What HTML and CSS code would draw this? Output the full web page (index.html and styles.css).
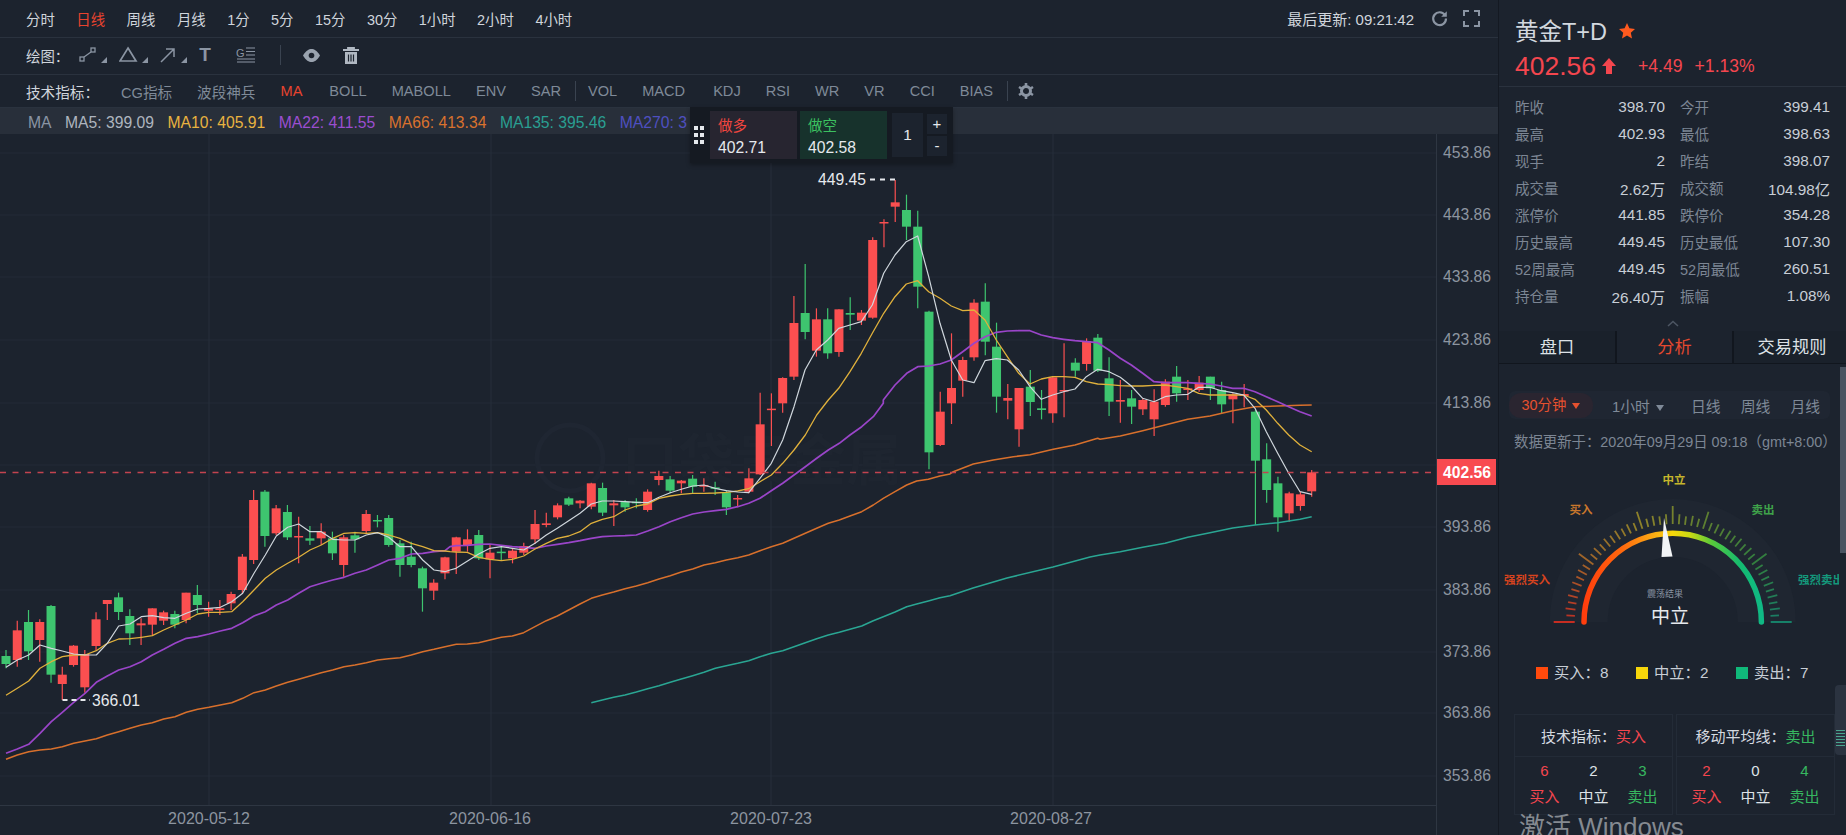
FILE: index.html
```html
<!DOCTYPE html>
<html lang="zh-CN">
<head>
<meta charset="utf-8">
<title>黄金T+D</title>
<link rel="stylesheet" href="styles.css">
</head>
<body>
<div class="app">
  <main class="main">
    <div class="bar bar-periods">
      <span>分时</span><span class="on">日线</span><span>周线</span><span>月线</span><span>1分</span><span>5分</span><span>15分</span><span>30分</span><span>1小时</span><span>2小时</span><span>4小时</span>
      <div class="updated">
        <span class="updated-text">最后更新: 09:21:42</span>
        <svg class="ic" width="17" height="17" viewBox="0 0 17 17"><path d="M14 5.2A6.4 6.4 0 1 0 15 8.5" fill="none" stroke="#8b95a3" stroke-width="2.2"/><path d="M15.8 1.2v5.6h-5.6z" fill="#8b95a3"/></svg>
        <svg class="ic" width="17" height="17" viewBox="0 0 17 17"><path d="M1 6V1h5M11 1h5v5M16 11v5h-5M6 16H1v-5" fill="none" stroke="#8b95a3" stroke-width="2"/></svg>
      </div>
    </div>
    <div class="bar bar-tools">
      <span class="bar-label">绘图：</span>
      <svg class="tool-a" width="28" height="18" viewBox="0 0 28 18"><rect x="1" y="11" width="4" height="4" fill="none" stroke="#8b95a3" stroke-width="1.3"/><rect x="12" y="2" width="4" height="4" fill="none" stroke="#8b95a3" stroke-width="1.3"/><path d="M5 11l7-5" stroke="#8b95a3" stroke-width="1.3"/><path d="M28 11v6h-6z" fill="#8b95a3"/></svg>
      <svg width="29" height="18" viewBox="0 0 29 18"><path d="M9 2l8 13H1z" fill="none" stroke="#8b95a3" stroke-width="1.7"/><path d="M29 11v6h-6z" fill="#8b95a3"/></svg>
      <svg width="27" height="18" viewBox="0 0 27 18"><path d="M1 16L14 3M6 3h8v8" fill="none" stroke="#8b95a3" stroke-width="1.5"/><path d="M27 11v6h-6z" fill="#8b95a3"/></svg>
      <span class="tool-t">T</span>
      <svg class="tool-g" width="20" height="18" viewBox="0 0 20 18"><text x="0" y="11" class="tool-g-text">G</text><path d="M10 2h9M10 5.5h9M10 9h9M1 13h18M1 16h18" stroke="#8b95a3" stroke-width="1.2"/></svg>
      <i class="sep sep-tools"></i>
      <svg class="tool-eye" width="17" height="13" viewBox="0 0 17 13"><path d="M0 6.5C3 1.5 5.800 0 8.500 0S14 1.500 17 6.500C14 11.500 11.200 13 8.500 13S3 11.500 0 6.500z" fill="#9aa3af"/><circle cx="8.500" cy="6.500" r="2.800" fill="#1c232e"/></svg>
      <svg class="tool-bin" width="16" height="17" viewBox="0 0 16 17"><path d="M0 3h16M5 3V1h6v2" fill="none" stroke="#b0b8c2" stroke-width="1.800"/><path d="M2 5h12v12H2z" fill="#b0b8c2"/><path d="M5.500 7.500v7M8 7.500v7M10.500 7.500v7" stroke="#1c232e" stroke-width="1.200"/></svg>
    </div>
    <div class="bar bar-ind">
      <span class="bar-label ind-label">技术指标：</span>
      <span>CG指标</span><span>波段神兵</span><span class="on">MA</span><span class="ml2">BOLL</span><span>MABOLL</span><span>ENV</span><span>SAR</span>
      <i class="sep sep-ind"></i>
      <span>VOL</span><span>MACD</span><span class="ml4">KDJ</span><span>RSI</span><span>WR</span><span>VR</span><span>CCI</span><span>BIAS</span>
      <i class="sep sep-ind"></i>
      <svg class="gear" width="16" height="16" viewBox="0 0 16 16"><circle cx="8" cy="8" r="4.500" fill="none" stroke="#8b95a3" stroke-width="3"/><path d="M8 0v3M8 13v3M1 4l2.500 1.500M12.500 10.500L15 12M1 12l2.500-1.500M12.500 5.500L15 4" stroke="#8b95a3" stroke-width="2.600"/></svg>
    </div>
    <div class="legend">
      <span class="lg-ma">MA</span><span class="lg-5">MA5: 399.09</span><span class="lg-10">MA10: 405.91</span><span class="lg-22">MA22: 411.55</span><span class="lg-66">MA66: 413.34</span><span class="lg-135">MA135: 395.46</span><span class="lg-270">MA270: 3</span>
    </div>
    <div class="chart"><svg id="chart" class="chart-svg" viewBox="0 134 1499 701" width="1499" height="701"></svg></div>
    <div class="trade">
      <div class="grip"><i></i><i></i><i></i><i></i><i></i><i></i></div>
      <div class="side side-long"><span class="side-name">做多</span><span class="side-price">402.71</span></div>
      <div class="side side-short"><span class="side-name">做空</span><span class="side-price">402.58</span></div>
      <div class="qty">1</div>
      <div class="steps"><span>+</span><span>-</span></div>
    </div>
  </main>
  <aside class="aside">
    <header class="head">
      <div class="title"><span>黄金T+D</span><svg class="star" width="16" height="16" viewBox="0 0 16 16"><path d="M8 0l2.400 5.300 5.600.6-4.200 3.800 1.200 5.700L8 12.500 3 15.400l1.200-5.700L0 5.900l5.600-.6z" fill="#ff5a1f"/></svg></div>
      <div class="price-line">
        <span class="price">402.56</span>
        <svg class="up" width="14" height="16" viewBox="0 0 14 16"><path d="M7 0l7 8H10v8H4V8H0z" fill="#f4464e"/></svg>
        <span class="chg">+4.49</span><span class="chg">+1.13%</span>
      </div>
    </header>
    <div class="stats">
      <div><span>昨收</span><b>398.70</b></div><div><span>今开</span><b>399.41</b></div>
      <div><span>最高</span><b>402.93</b></div><div><span>最低</span><b>398.63</b></div>
      <div><span>现手</span><b>2</b></div><div><span>昨结</span><b>398.07</b></div>
      <div><span>成交量</span><b>2.62万</b></div><div><span>成交额</span><b>104.98亿</b></div>
      <div><span>涨停价</span><b>441.85</b></div><div><span>跌停价</span><b>354.28</b></div>
      <div><span>历史最高</span><b>449.45</b></div><div><span>历史最低</span><b>107.30</b></div>
      <div><span>52周最高</span><b>449.45</b></div><div><span>52周最低</span><b>260.51</b></div>
      <div><span>持仓量</span><b>26.40万</b></div><div><span>振幅</span><b>1.08%</b></div>
    </div>
    <div class="fold"><svg width="12" height="7" viewBox="0 0 12 7"><path d="M1 6l5-4.500L11 6" fill="none" stroke="#4d5663" stroke-width="1.600"/></svg></div>
    <div class="tabs"><span>盘口</span><span class="on">分析</span><span>交易规则</span></div>
    <section class="analysis">
      <div class="frames">
        <span class="frame frame-on">30分钟<i class="tri tri-on"></i></span>
        <span class="frame frame-hour">1小时<i class="tri"></i></span>
        <span class="frame">日线</span><span class="frame">周线</span><span class="frame">月线</span>
      </div>
      <div class="stamp">数据更新于：2020年09月29日 09:18（gmt+8:00）</div>
      <svg id="gauge" class="gauge" viewBox="1500 465 340 185" width="340" height="185"></svg>
      <div class="tally">
        <span><i class="sq sq-buy"></i>买入：8</span>
        <span><i class="sq sq-mid"></i>中立：2</span>
        <span><i class="sq sq-sell"></i>卖出：7</span>
      </div>
      <div class="summary">
        <div class="sum-col">
          <div class="sum-head">技术指标：<em class="buy">买入</em></div>
          <div class="sum-grid">
            <span class="buy">6</span><span>2</span><span class="sell">3</span>
            <span class="buy">买入</span><span>中立</span><span class="sell">卖出</span>
          </div>
        </div>
        <div class="sum-col">
          <div class="sum-head">移动平均线：<em class="sell">卖出</em></div>
          <div class="sum-grid">
            <span class="buy">2</span><span>0</span><span class="sell">4</span>
            <span class="buy">买入</span><span>中立</span><span class="sell">卖出</span>
          </div>
        </div>
      </div>
    </section>
    <i class="scroll"></i>
    <div class="widget"><i></i></div>
    <div class="winmark">激活 Windows</div>
  </aside>
</div>
<script src="app.js"></script>
</body>
</html>
```
FILE: styles.css
```css
* { box-sizing: border-box; }
html, body { margin: 0; height: 835px; overflow: hidden; background: #1c232e; }
body { font-family: "Liberation Sans", "Noto Sans CJK SC", sans-serif; color: #c3cad3; }
i, em { font-style: normal; }
b { font-weight: 400; }

.app { display: flex; width: 1846px; height: 835px; }
.main { position: relative; width: 1499px; height: 835px; display: flex; flex-direction: column; border-right: 1px solid #141922; }

.bar { display: flex; align-items: center; padding-left: 26px; border-bottom: 1px solid #2a323e; font-size: 14.4px; }
.bar-periods { height: 38px; gap: 21.500px; color: #d0d5dc; }
.bar-periods .on { color: #e8432e; }
.updated { margin-left: auto; margin-right: 18px; display: flex; align-items: center; gap: 15px; }
.updated-text { margin-right: 2px; font-size: 15px; }
.ic { display: block; }

.bar-tools { height: 37px; gap: 12px; padding-bottom: 2px; }
.bar-label { color: #d0d5dc; }
.tool-a { margin-left: -2px; }
.tool-t { font-size: 19px; font-weight: 700; color: #8b95a3; width: 13px; line-height: 18px; }
.tool-g { margin-left: 12px; }
.tool-g-text { font-size: 11px; fill: #8b95a3; }
.sep { display: block; width: 1px; background: #3a4350; }
.sep-tools { height: 20px; margin: 0 0 0 12px; }
.tool-eye { margin-left: 10px; }
.tool-bin { margin-left: 11px; }

.bar-ind { height: 33px; gap: 25px; color: #7f8a98; font-size: 14.6px; }
.ind-label { margin-right: -3px; }
.bar-ind .on { color: #e8432e; }
.ml2 { margin-left: 2px; }
.ml4 { margin-left: 3px; }
.sep-ind { height: 20px; margin: 0 -13px 0 -11px; }
.gear { margin-left: -2px; }

.legend { height: 26px; background: #282f3a; display: flex; align-items: center; padding: 3px 0 0 28px; font-size: 15.700px; white-space: nowrap; overflow: hidden; flex: none; gap: 13.500px; }
.lg-ma { color: #8a95a5; }
.lg-5 { color: #aeb5bf; }
.lg-10 { color: #e9b340; }
.lg-22 { color: #9b4ed0; }
.lg-66 { color: #d9722e; }
.lg-135 { color: #2a9f92; }
.lg-270 { color: #4f4fc0; }

.chart { flex: 1; min-height: 0; }
.chart-svg { display: block; }
.ax { font-size: 15.700px; fill: #8d95a0; }
.ax-date { font-size: 16px; fill: #8d95a0; text-anchor: middle; }
.ax-tag { font-size: 15.700px; fill: #fff; font-weight: 700; }
.ax-ext { font-size: 15.700px; fill: #e6e9ed; }
.mark { font-size: 56px; fill: #1e2530; font-weight: 700; }

.trade { position: absolute; left: 690px; top: 107px; width: 263px; height: 56px; background: #151a22; display: flex; align-items: center; padding: 0 6px 0 4px; box-shadow: 0 2px 4px rgba(0,0,0,.3); }
.grip { width: 12px; margin-right: 4px; display: grid; grid-template-columns: 4px 4px; gap: 3px 2px; }
.grip i { display: block; width: 4px; height: 4px; background: #e4e8ec; }
.side { width: 87px; height: 48px; display: flex; flex-direction: column; justify-content: space-between; padding: 5px 8px 1px; font-size: 15.700px; line-height: 20px; }
.side-long { background: #272530; }
.side-short { background: #17322c; margin-left: 3px; }
.side-long .side-name { color: #f0453f; }
.side-short .side-name { color: #3cc060; }
.side-name { font-size: 14.500px; }
.side-price { color: #e6e9ed; }
.qty { width: 31px; height: 44px; margin-left: 5px; background: #1c232e; color: #e6e9ed; font-size: 15.300px; display: flex; align-items: center; justify-content: center; }
.steps { width: 20px; margin-left: 4px; display: flex; flex-direction: column; gap: 2px; }
.steps span { height: 20px; background: #1c232e; color: #e6e9ed; font-size: 15px; line-height: 19px; text-align: center; }

.aside { position: relative; width: 347px; height: 835px; overflow: hidden; }
.head { height: 87px; padding: 10px 0 0 16px; border-bottom: 1px solid #2a323e; }
.title { height: 40px; display: flex; align-items: center; gap: 12px; font-size: 23.500px; color: #d2d8df; }
.star { margin-top: 2px; }
.price-line { height: 30px; margin-top: 1px; display: flex; align-items: center; color: #f4464e; }
.price { font-size: 26.500px; margin-right: 6px; }
.up { margin-right: 22px; }
.chg { font-size: 17.600px; margin-right: 12px; }

.stats { display: grid; grid-template-columns: 150px 150px; column-gap: 15px; padding: 6px 0 0 16px; font-size: 15.300px; }
.stats div { height: 27px; display: flex; align-items: center; justify-content: space-between; }
.stats span { color: #7c8694; font-size: 14.500px; }
.stats b { color: #c8ced6; }
.fold { height: 22px; display: flex; align-items: center; justify-content: center; padding: 6px 0 0 0; }

.tabs { height: 33px; display: grid; grid-template-columns: 116px 115px 116px; font-size: 17.200px; text-align: center; line-height: 32px; color: #dde1e6; background: #11161e; gap: 2px; border-bottom: 1px solid #11161e; }
.tabs span { background: #1a212b; }
.tabs .on { background: #1c232e; color: #e5492f; }

.analysis { padding: 27px 10px 0 15px; }
.frames { height: 28px; display: flex; align-items: center; font-size: 14.800px; color: #7f8a98; background: #1f2632; border-radius: 6px; width: 321px; margin-left: -5px; }
.frame { width: 52px; text-align: center; }
.frame-on { width: 84px; height: 25px; line-height: 25px; background: #2a2530; border-radius: 12px; color: #e5512f; flex: none; font-size: 14.400px; }
.frame-hour { width: 70px; margin-left: 10px; margin-right: 8px; flex: none; }
.tri { display: inline-block; vertical-align: 1px; margin-left: 6px; border: 4.500px solid transparent; border-top: 6px solid #7f8a98; border-bottom: 0; }
.tri-on { border-top-color: #e5512f; }
.stamp { margin-top: 13px; height: 20px; font-size: 14.400px; line-height: 20px; color: #7c8694; white-space: nowrap; }
.gauge { display: block; margin: 12px 0 0 -15px; }
.g-lab { font-size: 11.500px; font-weight: 700; text-anchor: middle; }
.g-sub { font-size: 9px; fill: #8b95a3; text-anchor: middle; }
.g-val { font-size: 19px; fill: #e6e9ed; text-anchor: middle; }

.tally { margin-top: 14px; height: 20px; display: flex; padding-left: 22px; font-size: 15.300px; line-height: 20px; color: #c8ced6; }
.tally span { display: flex; align-items: center; width: 103px; }
.sq { display: block; width: 12px; height: 12px; margin-right: 6px; }
.sq-buy { background: #ff4a0d; }
.sq-mid { background: #f6d60b; }
.sq-sell { background: #10b97a; }

.summary { margin-top: 31px; width: 321px; height: 101px; display: grid; grid-template-columns: 159px 159px; gap: 3px; }
.sum-col { border: 1px solid #232b37; display: flex; flex-direction: column; }
.sum-head { height: 42px; border-bottom: 1px solid #232b37; display: flex; align-items: center; justify-content: center; font-size: 15px; color: #d5dae0; }
.sum-grid { flex: 1; display: grid; grid-template-columns: repeat(3, 49px); justify-content: center; grid-template-rows: 26px 26px; padding-top: 1px; font-size: 15px; line-height: 26px; text-align: center; color: #dfe3e8; }
.buy { color: #f4464e; }
.sell { color: #37b760; }

.scroll { position: absolute; right: 0; top: 367px; width: 6px; height: 186px; background: #4a5361; }
.widget { position: absolute; right: 0; top: 685px; width: 11px; height: 70px; background: #2b3340; border-radius: 4px 0 0 4px; }
.widget i { display: block; margin: 45px 1px 0; height: 18px; background: repeating-linear-gradient(#4aa58f 0 1px, #2b3340 1px 3px); }
.winmark { position: absolute; left: 20px; top: 812px; font-size: 26px; line-height: 30px; color: #858a91; white-space: nowrap; }
```
FILE: app.js
```js
var NS = 'http://www.w3.org/2000/svg';
function el(parent, name, attrs, text) {
  var n = document.createElementNS(NS, name);
  for (var k in attrs) n.setAttribute(k, attrs[k]);
  if (text !== undefined) n.textContent = text;
  parent.appendChild(n);
  return n;
}
var svg = document.getElementById('chart');
var RED = '#fb4f50', GREEN = '#3ec56f';

// horizontal grid + y axis
var ticks = [[153,'453.86'],[215,'443.86'],[277,'433.86'],[340,'423.86'],[403,'413.86'],[527,'393.86'],[590,'383.86'],[652,'373.86'],[713,'363.86'],[776,'353.86']];
ticks.forEach(function (t) {
  el(svg, 'line', {x1:0, x2:1437, y1:t[0], y2:t[0], stroke:'#232b37', 'stroke-width':1});
  el(svg, 'text', {x:1443, y:t[0]+5, class:'ax'}, t[1]);
});
el(svg, 'line', {x1:0, x2:1437, y1:465, y2:465, stroke:'#232b37', 'stroke-width':1});
[209,491,771,1053].forEach(function (x) {
  el(svg, 'line', {x1:x, x2:x, y1:134, y2:805, stroke:'#262e3a', 'stroke-width':1});
});
el(svg, 'line', {x1:1436.500, x2:1436.500, y1:134, y2:835, stroke:'#2e3642', 'stroke-width':1});
el(svg, 'line', {x1:0, x2:1437, y1:805.500, y2:805.500, stroke:'#2e3642', 'stroke-width':1});
[[209,'2020-05-12'],[490,'2020-06-16'],[771,'2020-07-23'],[1051,'2020-08-27']].forEach(function (d) {
  el(svg, 'text', {x:d[0], y:824, class:'ax-date'}, d[1]);
});

// watermark
el(svg, 'circle', {cx:570, cy:458, r:33, fill:'none', stroke:'#1f2632', 'stroke-width':5});
el(svg, 'text', {x:622, y:480, class:'mark'}, '口袋贵金属');

// candles: [type, high, top, bottom, low] measured in zoom crops (3x)
var groups = [
 [450, 0, 'g600,618,642,655 r512,541,630,650 g480,516,604,630 r508,516,570,635 g465,468,674,698 r650,674,702,750 r585,587,645,650 r600,612,712,728 r487,508,588,600 r450,450,462,510 g428,442,486,510 g478,498,550,585 r505,520,526,585 r475,475,524,555 r482,487,512,525 g482,492,524,535 r428,428,510,520 g405,435,465,490 r455,475,482,500 r450,475,480,495 r425,432,460,480 r312,320,420,432 r120,150,330,342 g120,125,258,290 r165,175,250,255 g165,186,262,270 r200,258,262,340 g228,265,272,285 r220,245,265,285 g245,265,310,330 r255,262,345,380 g245,256,268,308 r180,192,243,250 g195,210,214,232 g195,204,285,290 g270,280,345,380 g275,320,345,352 g350,355,415,485 r388,398,422,450 r320,322,370,388 r260,262,305,372 r238,268,285,305 g240,255,325,330 r285,308,328,385'],
 [400, 44, 'g440,455,458,480 r445,452,475,490 r428,438,458,465 r330,372,418,432 r338,370,375,382 r310,316,352,358 g290,295,314,318 r300,302,310,325 r248,250,320,328 g248,264,338,348 r300,310,316,378 g300,305,322,335 g295,305,310,325 r268,275,330,335 r212,228,240,256 g228,238,272,280 r240,242,250,280 g225,236,260,280 r235,255,260,275 g245,262,266,285 g270,277,322,345 r285,294,298,322'],
 [160, 66, 'r925,955,995,1000 r698,793,943,945 r700,746,750,858 r652,654,730,758 r408,489,650,660 g312,459,516,538 r445,478,572,590 g445,478,580,596 r448,448,576,590 g412,459,464,510 r450,458,482,495 r232,240,473,476 r178,186,190,262 r60,127,140,186 g104,150,200,240 g152,200,380,445 g452,455,877,928 r695,755,855,858 r520,684,730,792 r590,600,662,710 r418,428,592,602 g370,425,545,586 g488,560,710,758 r672,714,722,778 r684,684,808,860 g630,680,726,768 g690,745,750,778 r650,652,760,788 r550,690,694,772 g595,608,632,650 r535,543,612,632 g522,533,632,636'],
 [300, 98, 'g172,235,305,348 r240,300,305,368 g270,295,320,372 r295,300,328,345 r268,305,358,408 r238,245,315,320 g198,230,280,305 r240,265,270,300 r228,248,270,275 g230,230,265,300 g245,270,313,340 r280,283,298,370 r252,282,288,322 g330,335,482,675 g430,478,570,608 g530,550,652,695 r575,580,640,665 r575,583,618,632 r510,517,574,590']
];
groups.forEach(function (g) {
  g[2].split(' ').forEach(function (s, n) {
    var col = s[0] === 'r' ? RED : GREEN;
    var v = s.slice(1).split(',').map(function (a) { return g[0] + a / 3; });
    var x = 6 + 11.256 * (g[1] + n);
    el(svg, 'line', {x1:x, x2:x, y1:v[0], y2:v[3], stroke:col, 'stroke-width':1.200});
    el(svg, 'rect', {x:x-4.500, y:v[1], width:9, height:Math.max(v[2]-v[1],1.500), fill:col});
  });
});

// moving averages; each run is in the coordinates of one zoom crop
var O = {a:[0,450], b:[450,400], c:[740,160], d:[1100,300]};
function path(runs) {
  var out = [];
  runs.forEach(function (r) {
    var o = O[r[0]];
    var nums = r[1].split(/[ ,]/).map(Number), pts = [];
    for (var i = 0; i < nums.length; i += 2) pts.push([o[0] + nums[i]/3, o[1] + nums[i+1]/3]);
    out = out.filter(function (p) { return p[0] < pts[0][0]; }).concat(pts);
  });
  return out.map(function (p) { return p[0].toFixed(1) + ',' + p[1].toFixed(1); }).join(' ');
}
var lines = [
 ['#d8702c', 1.500, [
  ['a','18,928 52,915 86,905 120,900 154,897 187,890 221,880 255,873 289,866 322,855 356,845 390,835 424,825 457,818 491,807 525,800 559,787 593,778 627,772 661,765 695,758 728,745 762,728 796,720 829,708 863,697 896,688 930,678 964,668 998,660 1032,650 1065,645 1099,638 1133,630 1166,626 1200,623 1234,615 1268,605 1302,598 1335,590 1369,583 1403,580'],
  ['b','52,732 86,728 120,720 154,712 187,708 221,698 255,680 289,662 322,648 356,630 390,612 424,595 457,585 491,576 525,566 559,558 593,548 627,537 661,527 694,516 728,507 762,495 796,488 829,480 863,473 896,465 930,452 964,440 998,430 1032,415 1066,400 1100,385 1135,370 1168,360 1200,348 1235,335 1270,315 1300,295 1335,275 1370,255 1400,243 1435,238 1470,228 1500,222'],
  ['c','640,935 700,912 760,900 820,890 870,884 940,868 1005,855 1073,835 1140,828'],
  ['d','0,418 61,408 128,392 195,375 263,358 330,348 398,332 465,320 533,318 600,316 635,315']]],
 ['#2aa693', 1.500, [
  ['b','424,908 457,900 491,892 525,885 559,876 593,866 627,857 661,847 694,837 728,827 762,817 796,805 829,797 863,790 896,782 930,770 964,760 998,752 1032,740 1066,728 1100,716 1135,705 1168,697 1200,688 1235,678 1270,662 1300,650 1335,636 1370,620 1400,612 1435,603 1470,593 1500,587'],
  ['c','699,1284 801,1254 939,1221 1050,1191'],
  ['d','0,765 61,755 128,742 195,730 263,712 330,698 398,684 465,675 533,668 600,658 635,650']]],
 ['#9a45c9', 1.700, [
  ['a','18,910 52,897 86,883 120,850 154,815 187,787 221,757 255,730 289,697 322,678 356,660 390,650 424,635 457,615 491,598 525,580 559,565 593,560 627,552 661,543 695,535 728,518 762,498 796,485 829,465 863,450 896,430 930,410 964,400 998,390 1032,382 1065,370 1099,360 1133,345 1166,330 1200,325 1234,312 1268,310 1302,305 1335,302'],
  ['b','0,440 18,437 52,436 86,433 120,432 154,436 187,440 221,442 255,445 289,438 322,433 356,428 390,422 424,415 457,410 491,408 525,407 559,405 593,393 627,380 661,365 694,353 728,342 762,336 796,332 829,328 863,320 896,310 930,295 964,272 998,250 1032,225 1066,200 1100,175 1135,150 1168,130 1200,105 1235,80 1270,50 1300,10'],
  ['c','430,720 465,675 500,640 533,620 566,618 600,612 634,600 668,575 702,550 735,530 769,517 802,513 836,512 870,512 904,525 938,533 971,538 1005,542 1039,545 1073,548 1107,565 1140,590'],
  ['d','27,150 61,175 94,195 128,220 162,245 195,248 229,248 263,248 296,250 330,252 364,258 398,265 431,265 465,275 499,290 533,305 566,320 600,335 635,348']]],
 ['#e0b13c', 1.300, [
  ['a','18,736 52,715 86,693 120,655 154,635 187,620 221,615 255,615 289,602 322,580 356,567 390,566 424,562 457,557 491,540 525,525 559,510 593,492 627,487 661,487 695,485 728,455 762,420 796,385 829,360 863,340 896,322 930,300 964,285 998,265 1032,250 1065,248 1099,250 1133,248 1166,255 1200,265 1234,280 1268,290 1302,302 1335,303'],
  ['b','0,455 18,456 52,457 86,472 120,478 154,482 187,478 221,468 255,447 289,430 322,415 356,408 390,395 424,370 457,358 491,350 525,330 559,318 593,312 627,295 661,288 694,283 728,280 762,280 796,279 829,277 863,273 896,266 930,245 964,225 998,190 1032,150 1066,105 1100,45 1135,0'],
  ['c','296,685 330,635 364,580 397,520 431,460 465,410 499,372 533,362 566,395 600,415 634,438 668,452 702,450 735,480 769,540 802,590 836,640 870,672 904,657 938,650 971,650 1005,652 1039,665 1073,672 1107,676'],
  ['d','27,254 61,257 94,258 128,258 162,256 195,255 229,260 263,265 296,280 330,285 364,285 398,285 431,285 465,298 499,330 533,370 566,405 600,435 635,455']]],
 ['#cfd6dc', 1.200, [
  ['a','18,652 52,630 86,615 120,585 154,595 187,603 221,612 255,615 289,615 322,580 356,528 390,522 424,500 457,497 491,503 525,505 559,490 593,477 627,475 661,472 695,455 728,430 762,370 796,315 829,258 863,232 896,222 930,245 964,245 998,268 1032,270 1065,270 1099,255 1133,248 1166,262 1200,290 1234,290 1268,330 1302,360 1335,365'],
  ['b','0,510 18,505 86,462 120,445 154,440 187,445 221,450 255,430 289,405 322,385 356,362 390,340 424,312 457,303 491,303 525,305 559,307 593,308 627,292 661,278 694,268 728,258 762,255 796,265 829,272 863,276 896,278 930,235 964,190 998,100 1032,10'],
  ['c','128,840 162,740 195,630 229,570 263,540 296,505 330,495 364,485 397,435 431,340 465,285 499,245 533,228 566,350 600,490 634,600 668,660 702,668 735,602 769,596 802,600 836,630 870,680 904,718 938,705 971,695 1005,687 1039,650 1073,628 1107,640 1140,650'],
  ['d','27,215 61,232 94,258 128,295 162,305 195,290 229,285 263,283 296,262 330,262 364,272 398,278 431,285 465,325 499,395 533,460 566,520 600,575 635,583']]]
];
lines.forEach(function (l) {
  el(svg, 'polyline', {points:path(l[2]), fill:'none', stroke:l[0], 'stroke-width':l[1], 'stroke-linejoin':'round'});
});

// last price line and tag
el(svg, 'line', {x1:0, x2:1437, y1:472.500, y2:472.500, stroke:'#c2434f', 'stroke-width':1.300, 'stroke-dasharray':'6 6.500'});
el(svg, 'rect', {x:1437, y:459, width:59, height:26, fill:'#f84a50'});
el(svg, 'text', {x:1443, y:477.500, class:'ax-tag'}, '402.56');

// extremes
el(svg, 'line', {x1:62.500, x2:90, y1:700, y2:700, stroke:'#e6e9ed', 'stroke-width':2, 'stroke-dasharray':'5 4'});
el(svg, 'text', {x:92, y:705.500, class:'ax-ext'}, '366.01');
el(svg, 'line', {x1:870, x2:895, y1:179.500, y2:179.500, stroke:'#e6e9ed', 'stroke-width':2, 'stroke-dasharray':'5 5'});
el(svg, 'text', {x:818, y:185, class:'ax-ext'}, '449.45');

// gauge
var g = document.getElementById('gauge');
var cx = 1673.700, cy = 623;
var defs = el(g, 'defs', {});
var grad = el(defs, 'linearGradient', {id:'arcGrad', x1:0, x2:1, y1:0, y2:0});
[[0,'#ff3d0d'],[.22,'#ff6a0e'],[.42,'#fbb714'],[.5,'#f6d80a'],[.6,'#c8d914'],[.72,'#58c93a'],[.88,'#14bb70'],[1,'#10b985']].forEach(function (s) {
  el(grad, 'stop', {offset:s[0], 'stop-color':s[1]});
});
el(g, 'path', {d:'M'+(cx-94)+' '+cy+'A94 94 0 0 1 '+(cx+94)+' '+cy, fill:'none', stroke:'#1f2631', 'stroke-width':58});
var stops = [[255,50,31],[214,128,40],[190,170,40],[120,165,50],[60,165,70],[22,160,125]];
for (var i = 0; i <= 50; i++) {
  var a = Math.PI * i / 50, t = i / 50 * 5, k = Math.min(Math.floor(t), 4), f = t - k;
  var c = [0,1,2].map(function (j) { return Math.round(stops[k][j] + (stops[k+1][j] - stops[k][j]) * f); });
  var major = [0,10,20,25,30,40,50].indexOf(i) >= 0;
  var end = i === 0 || i === 50 ? 119 : (major ? 116 : 108 - 1.500 * (i % 2));
  var sx = Math.cos(a), sy = Math.sin(a);
  el(g, 'line', {x1:cx - 98*sx, y1:cy - 98*sy, x2:cx - end*sx, y2:cy - end*sy,
    stroke:'rgb('+c.join(',')+')', 'stroke-width':i===0||i===50?1.600:1.800, opacity:i===0||i===50?.95:.7});
}
el(g, 'path', {d:'M'+(cx-88.700)+' '+cy+'A88.700 88.700 0 0 1 '+(cx+88.700)+' '+cy, fill:'none', stroke:'url(#arcGrad)', 'stroke-width':5.500, 'stroke-linecap':'round'});
el(g, 'path', {d:'M1665 519L1673.500 557.500L1662.500 558z', fill:'#f2f4f6'});
[[1675,484.500,'中立','#c5b52c'],[1582,515,'买入','#c9772c'],[1764,515,'卖出','#3fa24a'],[1528,584.500,'强烈买入','#d8431e'],[1822,584.500,'强烈卖出','#14987b']].forEach(function (l) {
  el(g, 'text', {x:l[0], y:l[1], class:'g-lab', fill:l[3]}, l[2]);
});
el(g, 'text', {x:1666, y:597.500, class:'g-sub'}, '震荡结果');
el(g, 'text', {x:1671, y:623.500, class:'g-val'}, '中立');
```
